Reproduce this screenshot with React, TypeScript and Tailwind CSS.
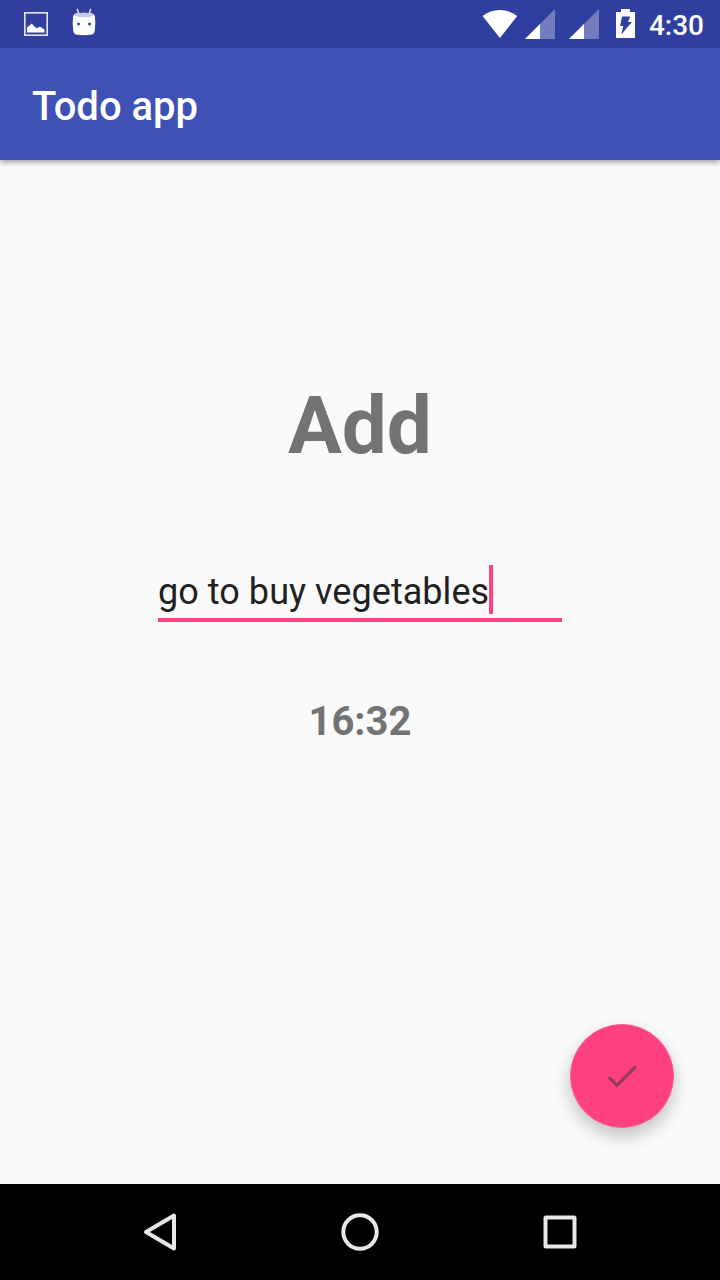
import React from "react";

function StatusBar() {
  return (
    <header className="z-20 flex h-12 items-start justify-between bg-[#303f9f] pl-6 pr-4 text-white">
      <div className="flex h-12 gap-6">
        <svg width="24" height="48" viewBox="0 0 24 48" fill="none">
          <rect x="0.8" y="12.8" width="22.4" height="22.4" stroke="#e4e6f4" strokeWidth="1.6" />
          <path d="M3 32.5v-5.2l2.2-1.5 2.6-2.4 3.6 4 2 .6 2.6-1.6 2.2 1.5 2.3 1.6v3z" fill="#fff" />
        </svg>
        <svg width="24" height="48" viewBox="0 0 24 48" fill="none">
          <path d="M5.2 8.7l1.5 5M18.7 8.7l-1.5 5" stroke="#dcdff0" strokeWidth="1.5" />
          <path d="M1 17.5q0-4 4-4.3 7-.7 14 0 4 .3 4 4.3l.3 6-.5 7q-.4 4-4.2 4.3-6.6.8-13.2 0-3.8-.3-4.2-4.3l-.5-7z" fill="#fff" />
          <path d="M2.2 14.5q1.2-1.1 2.8-1.3 7-.7 14 0 1.6.2 2.8 1.3-2.5 2.9-9.8 2.9t-9.8-2.9z" fill="#c8cce6" />
          <rect x="5.2" y="22.7" width="2.6" height="2.6" rx=".6" fill="#303f9f" />
          <rect x="16.3" y="22.7" width="2.6" height="2.6" rx=".6" fill="#303f9f" />
        </svg>
      </div>
      <div className="flex h-12">
        <svg width="36" height="48" viewBox="0 0 36 48" className="mr-[7px]">
          <path d="M.6 16Q8 10 17.8 10T35.2 16L17.9 38z" fill="#fff" />
        </svg>
        <svg width="30" height="48" viewBox="0 0 30 48" className="mr-3.5">
          <path d="M0 39L30 9v30z" fill="#737cbd" />
          <path d="M0 39l15-15v15z" fill="#fff" />
        </svg>
        <svg width="30" height="48" viewBox="0 0 30 48" className="mr-[17px]">
          <path d="M0 39L30 9v30z" fill="#737cbd" />
          <path d="M0 39l15-15v15z" fill="#fff" />
        </svg>
        <svg width="19" height="48" viewBox="0 0 19 48" className="mr-3.5">
          <path d="M0 12h5V9h9v3h5v26H0z" fill="#fff" />
          <path d="M6.2 16.5h8L12 22h3.9L5.300 34.500l2-8.500H4z" fill="#303f9f" />
        </svg>
        <span className="mt-2.5 h-8 text-[28px] leading-8 font-medium">4:30</span>
      </div>
    </header>
  );
}

function NavigationBar() {
  return (
    <nav className="flex h-24 items-center justify-between bg-black px-[140px]">
      <svg width="40" height="40" viewBox="0 0 40 40" fill="none" stroke="#e8e8e8" strokeWidth="4" strokeLinejoin="round">
        <path d="M34 3.5v33L6 20z" />
      </svg>
      <svg width="40" height="40" viewBox="0 0 40 40" fill="none" stroke="#e8e8e8" strokeWidth="4">
        <circle cx="20" cy="20" r="16.7" />
      </svg>
      <svg width="40" height="40" viewBox="0 0 40 40" fill="none" stroke="#e8e8e8" strokeWidth="4" strokeLinejoin="round">
        <rect x="5.5" y="5.5" width="29" height="29" rx="0.5" />
      </svg>
    </nav>
  );
}

export default function App() {
  return (
    <div className="flex h-[1280px] w-[720px] flex-col bg-[#fafafa] font-['Roboto',sans-serif] antialiased">
      <StatusBar />
      <div className="z-10 flex h-28 items-center bg-[#3f51b5] px-8 pt-1.5 shadow-[0_2px_6px_rgba(0,0,0,0.4)]">
        <h1 className="text-[40px] leading-[48px] font-medium text-white">Todo app</h1>
      </div>
      <main className="flex flex-1 flex-col items-center">
        <h2 className="mt-[218px] text-[80px] leading-[96px] font-bold text-[#737373]">Add</h2>
        <div className="mt-[91px] flex h-[57px] w-[404px] items-start border-b-4 border-[#ff4081]">
          <span className="mt-[3px] text-[36px] leading-12 tracking-[0.05px] whitespace-nowrap text-[#212121]">go to buy vegetables</span>
          <span className="h-[49px] w-1 bg-[#ff4081]" />
        </div>
        <p className="mt-[76px] text-[40px] leading-12 font-bold text-[#737373]">16:32</p>
        <button
          aria-label="Save"
          className="mt-auto mr-[46px] mb-14 flex size-[104px] items-center justify-center self-end rounded-full border border-[#ff5b93] bg-[#ff4081] shadow-[0_8px_18px_rgba(0,0,0,0.23)]"
        >
          <svg width="40" height="40" viewBox="0 0 24 24" fill="#953b5d">
            <path d="M9 16.2L4.8 12l-1.4 1.4L9 19 21 7l-1.4-1.4z" />
          </svg>
        </button>
      </main>
      <NavigationBar />
    </div>
  );
}
